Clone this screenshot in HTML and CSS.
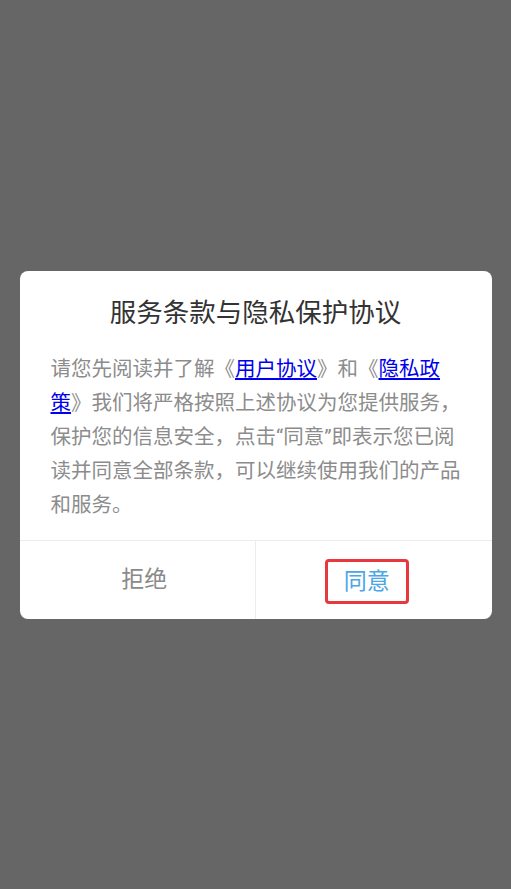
FILE: index.html
```html
<!DOCTYPE html>
<html lang="zh-CN">
<head>
<meta charset="utf-8">
<title>服务条款与隐私保护协议</title>
<link rel="stylesheet" href="styles.css">
</head>
<body>
<div class="overlay">
  <div class="dialog">
    <h1 class="title">服务条款与隐私保护协议</h1>
    <p class="content">请您先阅读并了解《<a class="link" href="#">用户协议</a>》和《<a class="link" href="#">隐私政策</a>》我们将严格按照上述协议为您提供服务，保护您的信息安全，点击“同意”即表示您已阅读并同意全部条款，可以继续使用我们的产品和服务。</p>
    <div class="actions">
      <div class="btn btn-reject">拒绝</div>
      <div class="btn btn-agree"><span class="highlight">同意</span></div>
    </div>
  </div>
</div>
</body>
</html>
```
FILE: styles.css
```css
html, body {
  margin: 0;
  padding: 0;
}
body {
  background: #666666;
  font-family: Roboto, "Noto Sans CJK SC", "Noto Sans", sans-serif;
}
.overlay {
  min-height: 100vh;
  display: flex;
  align-items: center;
  justify-content: center;
}
.dialog {
  width: 472px;
  background: #ffffff;
  border-radius: 8px;
  overflow: hidden;
}
.title {
  margin: 0;
  padding-top: 24px;
  font-size: 26.5px;
  line-height: 36px;
  font-weight: 400;
  color: #333333;
  text-align: center;
}
.content {
  margin: 21px 0 0;
  padding: 0 31px 18px;
  font-size: 20.5px;
  line-height: 34px;
  color: #8c8c8c;
}
.link {
  color: #0000ee;
  text-decoration: underline;
}
.actions {
  display: flex;
  border-top: 1px solid #ececec;
  height: 78px;
}
.btn {
  flex: 1;
  display: flex;
  align-items: center;
  justify-content: center;
  font-size: 23px;
  line-height: 31px;
}
.btn-reject {
  color: #8a8a8a;
  padding-left: 14px;
  border-right: 1px solid #ececec;
}
.btn-agree {
  color: #4aa6e6;
  padding-right: 14px;
  padding-top: 4px;
}
.highlight {
  display: inline-block;
  border: 3px solid #e8383d;
  border-radius: 4px;
  padding: 4px 16px;
}
```
